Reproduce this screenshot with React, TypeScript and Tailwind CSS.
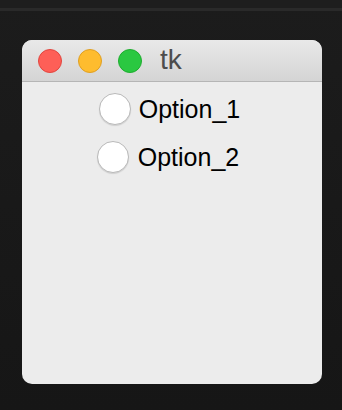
import React from "react";

function Radio() {
  return (
    <span className="block w-[32px] h-[32px] rounded-full bg-white border border-[#b9b9b9] shadow-[0_1px_1px_rgba(0,0,0,0.12)] shrink-0" />
  );
}

export default function App() {
  return (
    <div className="w-[342px] h-[410px] overflow-hidden bg-gradient-to-b from-[#1c1c1c] to-[#161616] flex flex-col" style={{ fontFamily: '"Liberation Sans", Arial, sans-serif' }}>
      <div className="h-[8px] bg-[#1e1e1e]" />
      <div className="h-[3px] bg-[#2a2a2a]" />
      <div className="pl-[22px] pt-[29px]">
        <div className="w-[300px] h-[344px] rounded-[10px] overflow-hidden bg-[#ececec] flex flex-col">
          <div className="h-[42px] bg-gradient-to-b from-[#e9e9e9] to-[#d4d4d4] border-b border-[#b5b5b5] flex items-center px-[16px] gap-[16px] shrink-0">
            <span className="w-[24px] h-[24px] rounded-full bg-[#fe5f57] border border-[#e1463f]" />
            <span className="w-[24px] h-[24px] rounded-full bg-[#febc2e] border border-[#df9f22]" />
            <span className="w-[24px] h-[24px] rounded-full bg-[#2ac841] border border-[#1fad2f]" />
            <span className="ml-[2px] text-[28px] leading-none text-[#4d4d4d] pb-[2px]">tk</span>
          </div>
          <div className="flex flex-col items-center pt-[11px] gap-[16px] pr-[5px]">
            <div className="flex items-center gap-[8px] h-[32px]">
              <Radio />
              <span className="text-[25px] leading-none text-black">Option_1</span>
            </div>
            <div className="flex items-center gap-[9px] h-[32px] pr-[3px]">
              <Radio />
              <span className="text-[25px] leading-none text-black">Option_2</span>
            </div>
          </div>
        </div>
      </div>
    </div>
  );
}
